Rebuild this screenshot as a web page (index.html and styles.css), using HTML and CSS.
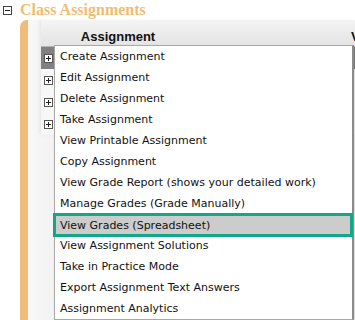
FILE: index.html
```html
<!DOCTYPE html>
<html lang="en">
<head>
    <meta charset="UTF-8" />
    <meta name="viewport" content="width=device-width, initial-scale=1.0" />
    <title>Class Assignments</title>
    <link rel="stylesheet" href="styles.css">
</head>
<body>

<div class="title-row">
    <svg class="toggle" width="9" height="9" viewBox="0 0 9 9">
        <rect x="0.5" y="0.5" width="8" height="8" fill="#fff" stroke="#444"/>
        <path d="M2 4.5h5" stroke="#222"/>
    </svg>
    <span class="title">Class Assignments</span>
</div>

<div class="panel">
    <div class="grid">
        <div class="grid-header">
            <div class="col-assign">Assignment</div>
            <div class="col-next">Visible</div>
        </div>
        <div class="row active"><svg class="expand" width="9" height="9" viewBox="0 0 9 9"><rect x="0.5" y="0.5" width="8" height="8" fill="#fff" stroke="#555"/><path d="M2 4.5h5M4.5 2v5" stroke="#222"/></svg></div>
        <div class="row"><svg class="expand" width="9" height="9" viewBox="0 0 9 9"><rect x="0.5" y="0.5" width="8" height="8" fill="#fff" stroke="#555"/><path d="M2 4.5h5M4.5 2v5" stroke="#222"/></svg></div>
        <div class="row"><svg class="expand" width="9" height="9" viewBox="0 0 9 9"><rect x="0.5" y="0.5" width="8" height="8" fill="#fff" stroke="#555"/><path d="M2 4.5h5M4.5 2v5" stroke="#222"/></svg></div>
        <div class="row"><svg class="expand" width="9" height="9" viewBox="0 0 9 9"><rect x="0.5" y="0.5" width="8" height="8" fill="#fff" stroke="#555"/><path d="M2 4.5h5M4.5 2v5" stroke="#222"/></svg></div>
    </div>
</div>

<ul class="context-menu">
    <li>Create Assignment</li>
    <li>Edit Assignment</li>
    <li>Delete Assignment</li>
    <li>Take Assignment</li>
    <li>View Printable Assignment</li>
    <li>Copy Assignment</li>
    <li>View Grade Report (shows your detailed work)</li>
    <li>Manage Grades (Grade Manually)</li>
    <li class="selected">View Grades (Spreadsheet)</li>
    <li>View Assignment Solutions</li>
    <li>Take in Practice Mode</li>
    <li>Export Assignment Text Answers</li>
    <li>Assignment Analytics</li>
</ul>

</body>
</html>
```

FILE: styles.css
```css
body {
    margin: 0;
    width: 355px;
    height: 320px;
    overflow: hidden;
    position: relative;
    background-color: #ffffff;
    font-family: "Liberation Sans", Arial, sans-serif;
}

.title-row {
    display: flex;
    align-items: center;
    height: 20px;
    padding-left: 3px;
}

.toggle {
    margin-right: 8px;
    margin-top: 1px;
}

.title {
    font-family: "Liberation Serif", "Times New Roman", serif;
    font-weight: bold;
    font-size: 16px;
    color: #f2bc72;
}

.panel {
    margin-left: 20px;
    height: 300px;
    border-left: 8px solid #f0bd78;
    border-top-left-radius: 7px;
    background: linear-gradient(to right, #f8f8f8, #efefef 40px, #f3f3f3);
    padding-left: 13px;
}

.grid {
    box-shadow: -2px 0 3px rgba(0, 0, 0, 0.05);
}

.grid-header {
    display: flex;
    height: 24px;
    align-items: flex-end;
    padding-bottom: 2px;
    border-bottom: 1px solid #b4b4b4;
    background: linear-gradient(to bottom, #f4f4f4, #e4e4e4);
    font-weight: bold;
    font-size: 13px;
    color: #111;
    white-space: nowrap;
}

.col-assign {
    flex-shrink: 0;
    width: 154px;
    text-align: center;
}

.col-next {
    flex-shrink: 0;
    padding-left: 156px;
}

.row {
    height: 22px;
    display: flex;
    align-items: center;
    padding-left: 3px;
    background-color: #f7f7f7;
}

.row.active {
    background-color: #808080;
}

.expand {
    display: block;
}

.context-menu {
    position: absolute;
    left: 54px;
    top: 45px;
    width: 297px;
    margin: 0;
    padding: 0;
    list-style: none;
    background-color: #ffffff;
    border: 1px solid #a8a8a8;
    border-right: 2px solid #8c8c8c;
    box-shadow: 1px 1px 2px rgba(0, 0, 0, 0.15);
    font-family: "DejaVu Sans", Tahoma, sans-serif;
    font-size: 11px;
    color: #111;
}

.context-menu li {
    height: 21px;
    line-height: 22px;
    padding-left: 5px;
    white-space: nowrap;
}

.context-menu li.selected {
    height: 18px;
    line-height: 19px;
    margin: -1px -1px -2px -2px;
    padding-left: 4px;
    border: 3px solid #13a78a;
    background-color: #cccccc;
}
```
